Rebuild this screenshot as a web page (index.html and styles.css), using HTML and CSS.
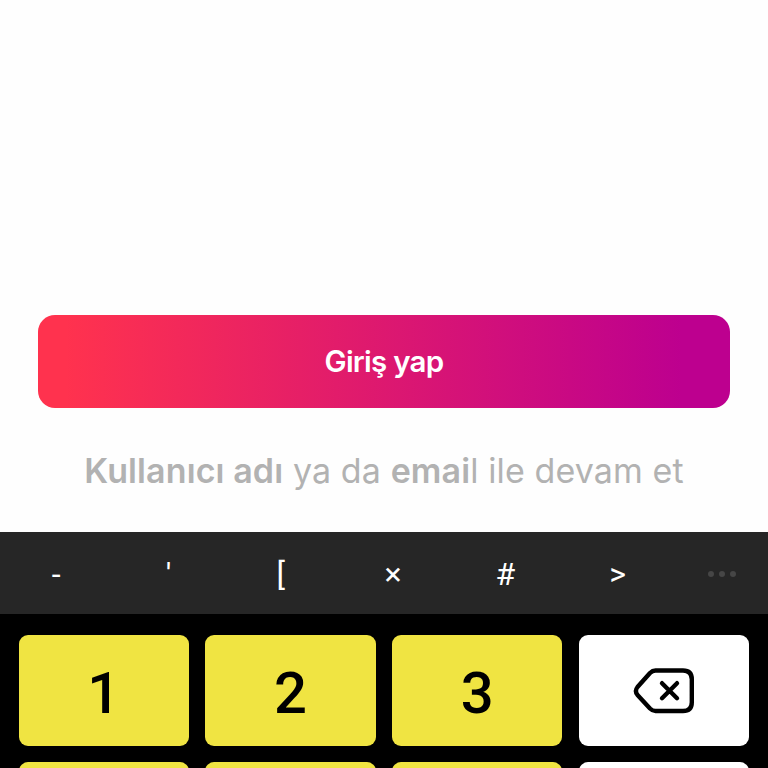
FILE: index.html
```html
<!DOCTYPE html>
<html lang="tr">
<head>
<meta charset="utf-8">
<title>Giriş yap</title>
<link rel="stylesheet" href="styles.css">
</head>
<body>
<main class="login">
  <button class="login-button">Giriş yap</button>
  <p class="alternative"><b>Kullanıcı adı</b> ya da <b>emai</b>l ile devam et</p>
</main>
<section class="keyboard">
  <div class="symbols">
    <span>-</span><span>'</span><span>[</span><span>×</span><span>#</span><span>&gt;</span>
    <span class="more"><i></i><i></i><i></i></span>
  </div>
  <div class="keys">
    <button class="key">1</button>
    <button class="key">2</button>
    <button class="key">3</button>
    <button class="key key-light" aria-label="Sil">
      <svg width="62" height="48" viewBox="0 0 62 48" fill="none" stroke="#000" stroke-width="4.400" stroke-linejoin="round" stroke-linecap="round">
        <path d="M22.500 3.500H50Q58.800 3.500 58.800 12.300V35.200Q58.800 44 50 44H22.500Q19.500 44 17 41.500L4.500 28Q1.300 24 4.500 20L17 6Q19.500 3.500 22.500 3.500Z"/>
        <path d="M29 16.200L44 31.200M44 16.200L29 31.200"/>
      </svg>
    </button>
    <div class="key"></div><div class="key"></div><div class="key"></div><div class="key key-light"></div>
  </div>
</section>
</body>
</html>
```
FILE: styles.css
```css
* { box-sizing: border-box; }
body { margin: 0; height: 768px; overflow: hidden; background: #fefefe; display: flex; flex-direction: column; }
button { border: 0; padding: 0; }
.login { height: 532px; flex: none; padding: 315px 38px 0; }
.login-button { display: block; width: 692px; height: 92.5px; border-radius: 17px; background: linear-gradient(90deg, #ff324e 4%, #bd008f 93%); color: #fff; font: 600 29.5px/92px Inter, sans-serif; letter-spacing: -0.75px; }
.alternative { margin: 40.5px -10px 0; text-align: center; white-space: nowrap; color: #b2b2b2; font: 400 34px/46px Inter, sans-serif; letter-spacing: 0.11px; }
.alternative b { font-weight: 600; }
.keyboard { flex: none; height: 236px; background: #000; overflow: hidden; }
.symbols { height: 82px; background: #262626; display: grid; grid-template-columns: repeat(6, 112.3px) 1fr; align-items: center; text-align: center; color: #fff; font: 400 32px/84px Roboto, sans-serif; }
.more { display: flex; justify-content: center; gap: 5px; padding: 0 0 1px 2px; }
.more i { width: 6px; height: 6px; border-radius: 50%; background: #464646; }
.keys { padding: 21px 18.5px 0; display: grid; grid-template-columns: repeat(4, 170.5px); column-gap: 16.2px; row-gap: 16px; }
.key { height: 111px; border-radius: 9px; background: #f0e442; color: #000; display: flex; align-items: center; justify-content: center; font: 500 58px/111px Roboto, sans-serif; padding-top: 6px; }
.key-light { background: #fff; padding-top: 0; }
```
